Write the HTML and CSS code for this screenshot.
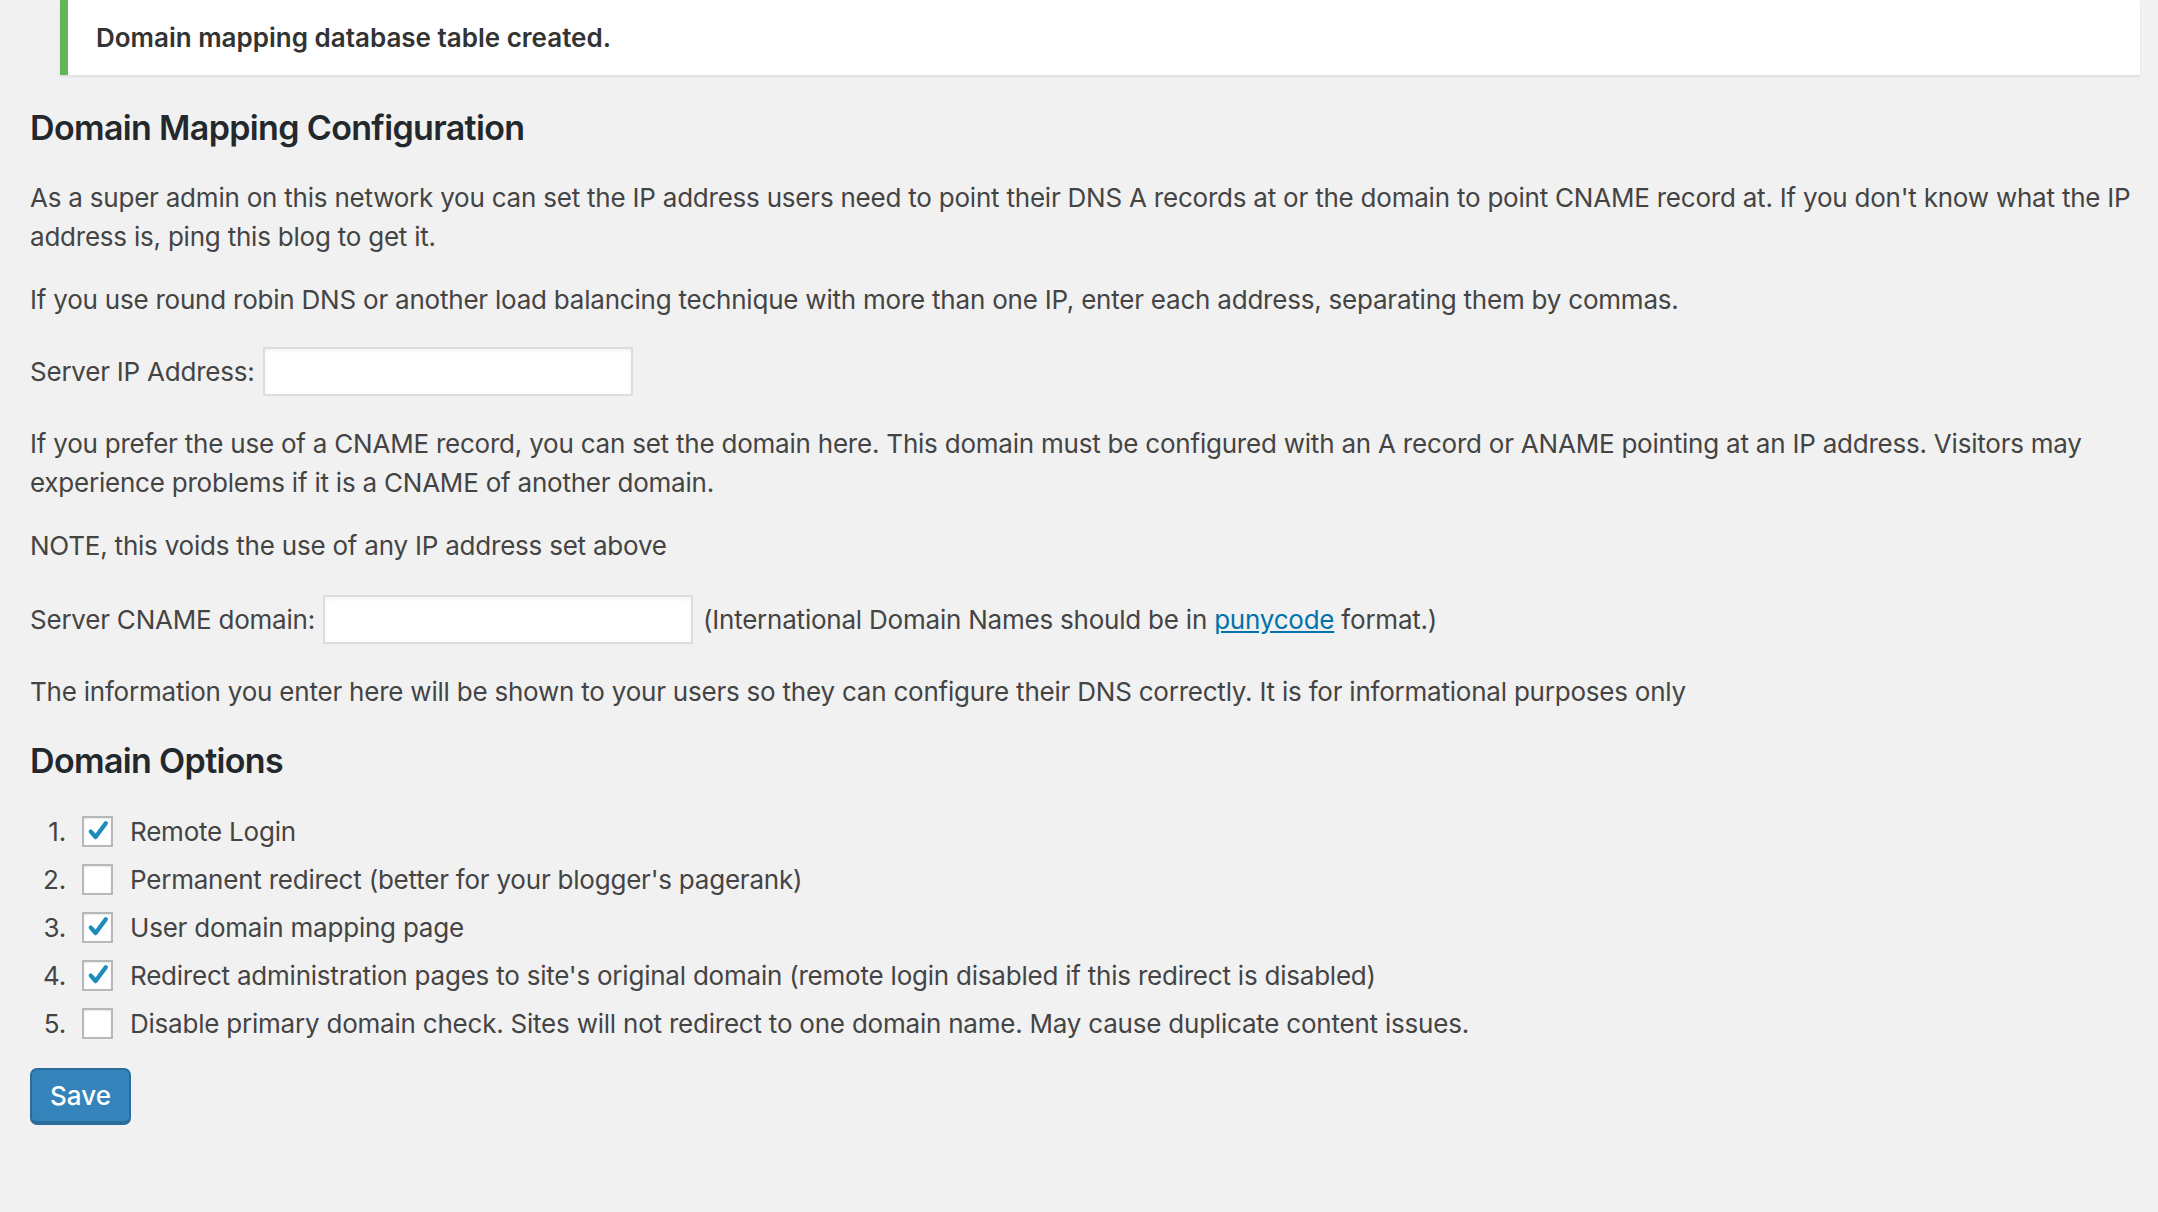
FILE: index.html
```html
<!DOCTYPE html>
<html lang="en">
<head>
  <meta charset="UTF-8" />
  <title>Domain Mapping</title>
  <link rel="stylesheet" href="styles.css">
</head>
<body>
  <div class="notice">
    <p><strong>Domain mapping database table created.</strong></p>
  </div>

  <div class="wrap">
    <h2>Domain Mapping Configuration</h2>
    <p>As a super admin on this network you can set the IP address users need to point their DNS A records at or the domain to point CNAME record at. If you don't know what the IP address is, ping this blog to get it.</p>
    <p>If you use round robin DNS or another load balancing technique with more than one IP, enter each address, separating them by commas.</p>

    <div class="field">
      <label for="ipaddress">Server IP Address:</label>
      <input type="text" id="ipaddress" class="text-input ip">
    </div>

    <p class="after-field">If you prefer the use of a CNAME record, you can set the domain here. This domain must be configured with an A record or ANAME pointing at an IP address. Visitors may experience problems if it is a CNAME of another domain.</p>
    <p>NOTE, this voids the use of any IP address set above</p>

    <div class="field field-cname">
      <label for="cname">Server CNAME domain:</label>
      <input type="text" id="cname" class="text-input cname">
      <span class="hint">(International Domain Names should be in <a href="#">punycode</a> format.)</span>
    </div>

    <p class="after-field">The information you enter here will be shown to your users so they can configure their DNS correctly. It is for informational purposes only</p>

    <h3>Domain Options</h3>
    <ol class="options">
      <li><span class="num">1.</span><span class="check on"><svg viewBox="0 0 20 20"><path d="M4 10.5 L8 15 L16.5 3.5" /></svg></span>Remote Login</li>
      <li><span class="num">2.</span><span class="check"></span>Permanent redirect (better for your blogger's pagerank)</li>
      <li><span class="num">3.</span><span class="check on"><svg viewBox="0 0 20 20"><path d="M4 10.5 L8 15 L16.5 3.5" /></svg></span>User domain mapping page</li>
      <li><span class="num">4.</span><span class="check on"><svg viewBox="0 0 20 20"><path d="M4 10.5 L8 15 L16.5 3.5" /></svg></span>Redirect administration pages to site's original domain (remote login disabled if this redirect is disabled)</li>
      <li><span class="num">5.</span><span class="check"></span>Disable primary domain check. Sites will not redirect to one domain name. May cause duplicate content issues.</li>
    </ol>

    <button class="button-primary">Save</button>
  </div>
</body>
</html>
```

FILE: styles.css
```css
* {
  box-sizing: border-box;
}

body {
  margin: 0;
  background-color: #f1f1f1;
  color: #444;
  font-family: 'Inter', 'Liberation Sans', sans-serif;
  font-size: 26px;
  line-height: 39px;
  letter-spacing: -0.22px;
}

.notice {
  margin: 0 18px 0 60px;
  background-color: #fff;
  border-left: 8px solid #62b55a;
  box-shadow: 0 2px 2px rgba(0, 0, 0, 0.08);
  padding: 18px 28px;
}

.notice p {
  margin: 0;
  color: #333;
}

.notice strong {
  font-weight: 600;
  letter-spacing: 0;
}

.wrap {
  padding: 31px 18px 80px 30px;
}

h2, h3 {
  margin: 0;
  color: #23282d;
  font-size: 34px;
  line-height: 44px;
  font-weight: 600;
  letter-spacing: -0.65px;
}

h2 {
  margin-bottom: 28px;
}

h3 {
  margin-top: 28px;
  margin-bottom: 24px;
}

p {
  margin: 0 0 24px;
}

.field {
  display: flex;
  align-items: center;
  height: 49px;
  margin-top: 28px;
  gap: 8px;
}

.field-cname {
  margin-top: 30px;
}

.text-input {
  width: 370px;
  height: 49px;
  background-color: #fff;
  border: 2px solid #ddd;
  box-shadow: inset 0 2px 4px rgba(0, 0, 0, 0.05);
  font: inherit;
  padding: 0 10px;
}

.hint {
  margin-left: 2px;
}

a {
  color: #0073aa;
}

.after-field {
  margin-top: 28px;
}

.options {
  list-style: none;
  margin: 0;
  padding: 0;
}

.options li {
  display: flex;
  align-items: center;
  height: 48px;
}

.num {
  width: 52px;
  padding-right: 16px;
  text-align: right;
}

.check {
  width: 31px;
  height: 31px;
  margin-right: 17px;
  background-color: #fff;
  border: 2px solid #b4b9be;
  box-shadow: inset 0 1px 2px rgba(0, 0, 0, 0.1);
  display: flex;
  align-items: center;
  justify-content: center;
}

.check svg {
  width: 24px;
  height: 24px;
  fill: none;
  stroke: #1e8cbe;
  stroke-width: 3.6;
  stroke-linecap: round;
  stroke-linejoin: round;
}

.button-primary {
  margin-top: 21px;
  width: 101px;
  height: 57px;
  background-color: #3583bb;
  border: 2px solid #2a6c9c;
  border-bottom-width: 4px;
  border-radius: 7px;
  color: #fff;
  font: inherit;
  font-weight: 500;
  cursor: pointer;
}
```
